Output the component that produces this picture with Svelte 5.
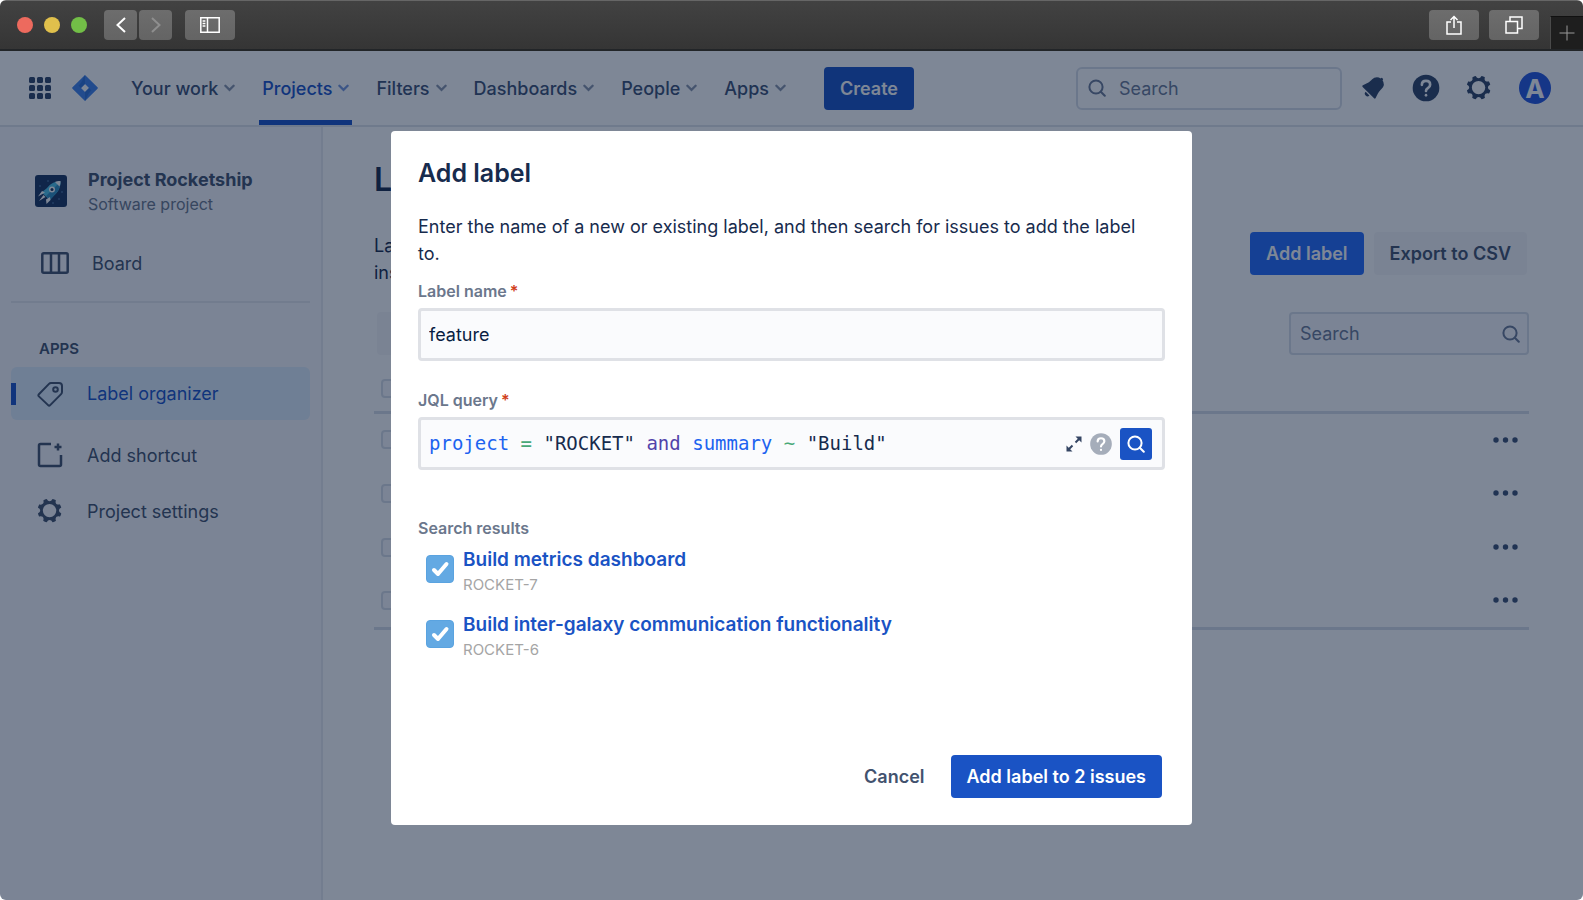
<script lang="ts">
  type NavItem = { name: string; active?: boolean };

  const nav: NavItem[] = [
    { name: 'Your work' },
    { name: 'Projects', active: true },
    { name: 'Filters' },
    { name: 'Dashboards' },
    { name: 'People' },
    { name: 'Apps' },
  ];

  const query = [
    { kind: 'name', text: 'project' },
    { kind: 'operator', text: '=' },
    { kind: 'value', text: '"ROCKET"' },
    { kind: 'keyword', text: 'and' },
    { kind: 'name', text: 'summary' },
    { kind: 'operator', text: '~' },
    { kind: 'value', text: '"Build"' },
  ];

  let labelName = $state('feature');
  let results = $state([
    { key: 'ROCKET-7', summary: 'Build metrics dashboard', checked: true },
    { key: 'ROCKET-6', summary: 'Build inter-galaxy communication functionality', checked: true },
  ]);
  let selected = $derived(results.filter((r) => r.checked).length);

  const rows = [1, 2, 3, 4];
</script>

{#snippet gear()}
  <svg class="icon" viewBox="0 0 24 24" aria-hidden="true">
    <path
      fill="currentColor"
      fill-rule="evenodd"
      d="M11.701 16.7a5.002 5.002 0 110-10.003 5.002 5.002 0 010 10.004m8.368-3.117a1.995 1.995 0 01-1.346-1.885c0-.876.563-1.613 1.345-1.885a.48.48 0 00.315-.574 8.947 8.947 0 00-.836-1.993.477.477 0 00-.598-.195 2.04 2.04 0 01-1.29.08 1.988 1.988 0 01-1.404-1.395 2.04 2.04 0 01.076-1.297.478.478 0 00-.196-.597 8.98 8.98 0 00-1.975-.826.479.479 0 00-.574.314 1.995 1.995 0 01-1.885 1.346 1.994 1.994 0 01-1.884-1.345.482.482 0 00-.575-.315c-.708.2-1.379.485-2.004.842a.47.47 0 00-.198.582A2.002 2.002 0 014.445 7.06a.478.478 0 00-.595.196 8.946 8.946 0 00-.833 1.994.48.48 0 00.308.572 1.995 1.995 0 011.323 1.877c0 .867-.552 1.599-1.324 1.877a.479.479 0 00-.308.57 8.99 8.99 0 00.723 1.79.477.477 0 00.624.194c.595-.273 1.343-.264 2.104.238.117.077.225.185.302.3.527.8.512 1.58.198 2.188a.473.473 0 00.168.628 8.946 8.946 0 002.11.897.474.474 0 00.57-.313 1.995 1.995 0 011.886-1.353c.878 0 1.618.567 1.887 1.353a.475.475 0 00.57.313 8.964 8.964 0 002.084-.883.473.473 0 00.167-.631c-.318-.608-.337-1.393.191-2.195.077-.116.185-.225.302-.302.772-.511 1.527-.513 2.125-.23a.477.477 0 00.628-.19 8.925 8.925 0 00.728-1.793.478.478 0 00-.314-.573"
    />
  </svg>
{/snippet}

{#snippet magnifier()}
  <svg class="magnifier" viewBox="0 0 18 18" aria-hidden="true">
    <circle cx="8" cy="8" r="6.6" />
    <path d="M12.8 12.8l4 4" />
  </svg>
{/snippet}

{#snippet help()}
  <svg class="icon" viewBox="0 0 24 24" aria-hidden="true">
    <circle cx="12" cy="12" r="10" fill="currentColor" />
    <g class="mark">
      <path d="M8.9 9.6C8.9 7.8 10.2 6.7 12 6.7s3.1 1.1 3.1 2.8c0 1.3-.8 2-1.7 2.6-.9.6-1.4 1-1.4 2.1" />
      <path d="M12 17.4v.1" />
    </g>
  </svg>
{/snippet}

<div class="window">
  <div class="titlebar">
    <div class="lights">
      <span class="light close"></span>
      <span class="light minimise"></span>
      <span class="light zoom"></span>
    </div>
    <div class="history">
      <button class="chrome-btn small" aria-label="Back">
        <svg viewBox="0 0 12 18"><path d="M10 2L2.5 9l7.5 7" /></svg>
      </button>
      <button class="chrome-btn small faded" aria-label="Forward">
        <svg viewBox="0 0 12 18"><path d="M2 2l7.5 7L2 16" /></svg>
      </button>
    </div>
    <button class="chrome-btn" aria-label="Show sidebar">
      <svg class="panel" viewBox="0 0 20 16">
        <path d="M.8.8h18.4v14.4H.8zM7.5.8v14.4M2.6 4h2.8M2.6 6.5h2.8M2.6 9h2.8" />
      </svg>
    </button>
    <div class="chrome-end">
      <button class="chrome-btn" aria-label="Share">
        <svg class="share" viewBox="0 0 16 20">
          <path d="M5 7H1v12h14V7h-4M8 13V1.5M4.5 5L8 1.5 11.5 5" />
        </svg>
      </button>
      <button class="chrome-btn" aria-label="Show tabs">
        <svg class="tabs" viewBox="0 0 18 18"><path d="M1 5.5h11.5V17H1zM5 5V1h12v11.5h-4" /></svg>
      </button>
    </div>
    <button class="new-tab" aria-label="New tab">
      <svg viewBox="0 0 16 16"><path d="M8 .5v15M.5 8h15" /></svg>
    </button>
  </div>

  <div class="page">
    <header>
      <button class="plain switcher" aria-label="Switch to">
        <svg viewBox="0 0 22 22">
          {#each [0, 8, 16] as y}
            {#each [0, 8, 16] as x}
              <rect {x} {y} width="6" height="6" rx="1.5" fill="currentColor" />
            {/each}
          {/each}
        </svg>
      </button>
      <a class="logo" href="#home" aria-label="Home">
        <svg viewBox="0 0 26 26">
          <path
            fill="#3f82ec"
            fill-rule="evenodd"
            d="M13 0l12.5 12.3a1 1 0 010 1.4L13 26 .5 13.7a1 1 0 010-1.4zm0 9l-4 4 4 4 4-4z"
          />
          <path
            fill="#2466cc"
            d="M13 0v9L9 13 6.500 10.500C10 8 10.500 4 13 0zM13 26v-9l4-4 2.500 2.500C16 18 15.500 22 13 26z"
            opacity=".6"
          />
        </svg>
      </a>
      <nav>
        {#each nav as item}
          <a href="#nav" class:active={item.active}>
            {item.name}
            <svg viewBox="0 0 12 8"><path d="M1.5 1.5L6 6l4.5-4.5" /></svg>
          </a>
        {/each}
      </nav>
      <button class="btn primary">Create</button>
      <div class="header-end">
        <label class="search">
          {@render magnifier()}
          <input type="text" placeholder="Search" aria-label="Search" />
        </label>
        <div class="tools">
          <button class="plain" aria-label="Notifications">
            <svg class="icon" viewBox="0 0 24 24">
              <path
                fill="currentColor"
                d="M6.485 17.669a2 2 0 002.829 0l-2.829-2.83a2 2 0 000 2.83zm4.897-12.191l-.725.725c-.782.782-2.21 1.813-3.206 2.311l-3.017 1.509c-.495.248-.584.774-.187 1.171l8.556 8.556c.398.396.922.313 1.171-.188l1.51-3.016c.494-.988 1.526-2.42 2.311-3.206l.725-.726a5.048 5.048 0 00.64-6.356 1.01 1.01 0 10-1.354-1.494c-.023.025-.046.049-.066.075a5.043 5.043 0 00-2.788-.84 5.036 5.036 0 00-3.57 1.478z"
              />
            </svg>
          </button>
          <button class="plain" aria-label="Help">{@render help()}</button>
          <button class="plain" aria-label="Settings">{@render gear()}</button>
          <button class="plain avatar" aria-label="Account">A</button>
        </div>
      </div>
    </header>

    <div class="body">
      <aside>
        <div class="project">
          <svg viewBox="0 0 32 32" aria-hidden="true">
            <rect width="32" height="32" rx="3" fill="#1b3560" />
            <path fill="#4fc3e8" d="M25.5 6.5c-6 0-10 2-13.500 6.500L6 18l2.500 1L13 23.500l1 2.500 5-5.500c4.500-4 6.500-8 6.500-14z" />
            <path fill="#2e8fc0" d="M25.5 6.5L11 21l2.500 2.500L14 26l5-5.500c4.500-4 6.500-8 6.500-14z" />
            <path
              fill="#fff"
              d="M25.5 6c-2.500 0-4 .4-5.500 1l4.500 4.500c.7-1.500 1-3 1-5.500zM3 21.500L7 16l3 1.500zM15 22l.5 3-4 4-.5-4.500zM4 26l4.500-6 2 2z"
            />
            <circle cx="17" cy="14.5" r="3" fill="#fff" />
            <circle cx="17" cy="14.5" r="1.5" fill="#1b3560" />
            <g fill="#5a86b8">
              <circle cx="5" cy="11" r=".8" />
              <circle cx="13" cy="6" r=".8" />
              <circle cx="24" cy="24" r=".8" />
              <circle cx="27" cy="17" r=".8" />
              <circle cx="18" cy="28" r=".8" />
            </g>
          </svg>
          <div>
            <strong>Project Rocketship</strong>
            <span>Software project</span>
          </div>
        </div>
        <a class="board" href="#board">
          <svg viewBox="0 0 28 22" aria-hidden="true">
            <rect x="1.3" y="1.3" width="25.4" height="19.4" rx="1.5" />
            <path d="M10 1v20M18 1v20" />
          </svg>
          Board
        </a>
        <hr />
        <h2>APPS</h2>
        <a class="item current" href="#labels">
          <svg class="tag" viewBox="0 0 26 26" aria-hidden="true">
            <path
              d="M14 2h8a3 3 0 013 3v6a3 3 0 01-.9 2.1L13.2 24.1a1.500 1.500 0 01-2.1 0L1.9 15.4a1.500 1.500 0 010-2.1L12 2.9A3 3 0 0114 2z"
            />
            <circle cx="18.5" cy="8.500" r="2.300" />
          </svg>
          Label organizer
        </a>
        <a class="item" href="#shortcut">
          <svg class="shortcut" viewBox="0 0 26 26" aria-hidden="true">
            <path d="M14 2H3.5A1.5 1.5 0 002 3.5v19A1.5 1.5 0 003.5 24h19a1.5 1.5 0 001.5-1.500V13" />
            <path d="M21 1.500v7M17.500 5h7" />
          </svg>
          Add shortcut
        </a>
        <a class="item" href="#settings">
          {@render gear()}
          Project settings
        </a>
      </aside>

      <main>
        <h1>Label organizer</h1>
        <div class="intro">
          <p>Labels<br />inside</p>
          <div class="actions">
            <button class="btn bright">Add label</button>
            <button class="btn subtle">Export to CSV</button>
          </div>
        </div>
        <div class="filters">
          <button class="btn subtle select-all" aria-label="Bulk actions"></button>
          <label class="search">
            <input type="text" placeholder="Search" aria-label="Search labels" />
            {@render magnifier()}
          </label>
        </div>
        <table>
          <thead>
            <tr>
              <th><input class="tick" type="checkbox" aria-label="Select all labels" /></th>
              <th></th>
            </tr>
          </thead>
          <tbody>
            {#each rows as row}
              <tr>
                <td><input class="tick" type="checkbox" aria-label="Select label {row}" /></td>
                <td>
                  <button class="plain more" aria-label="More actions">
                    <svg viewBox="0 0 26 6">
                      <circle cx="3" cy="3" r="2.700" />
                      <circle cx="12.500" cy="3" r="2.700" />
                      <circle cx="22" cy="3" r="2.700" />
                    </svg>
                  </button>
                </td>
              </tr>
            {/each}
          </tbody>
        </table>
      </main>
    </div>

    <div class="blanket">
      <form class="modal" role="dialog" aria-labelledby="modal-title">
        <h2 id="modal-title">Add label</h2>
        <p>Enter the name of a new or existing label, and then search for issues to add the label to.</p>

        <label class="caption" for="label-name">Label name<span class="required">*</span></label>
        <input id="label-name" class="field" type="text" bind:value={labelName} />

        <div class="caption jql-caption" id="jql-caption">JQL query<span class="required">*</span></div>
        <div class="field jql">
          <div class="code" role="textbox" tabindex="0" contenteditable="true" aria-labelledby="jql-caption">
            {#each query as token, i}{i ? ' ' : ''}<span class={token.kind}>{token.text}</span>{/each}
          </div>
          <button type="button" class="plain expand" aria-label="Expand editor">
            <svg viewBox="0 0 16 16">
              <path d="M9.5 6.5l4-4M6.5 9.5l-4 4" />
              <path class="tip" d="M9.5.5h6v6zM.5 9.5v6h6z" />
            </svg>
          </button>
          <button type="button" class="plain syntax" aria-label="Syntax help">{@render help()}</button>
          <button type="button" class="run" aria-label="Search">{@render magnifier()}</button>
        </div>

        <h3 class="caption">Search results</h3>
        <ul>
          {#each results as result}
            <li>
              <span class="check">
                <input type="checkbox" id={result.key} bind:checked={result.checked} />
                {#if result.checked}
                  <svg viewBox="0 0 28 28" aria-hidden="true"><path d="M8 15l4 4 8.5-10" /></svg>
                {/if}
              </span>
              <label for={result.key}>
                <strong>{result.summary}</strong>
                <span>{result.key}</span>
              </label>
            </li>
          {/each}
        </ul>

        <footer>
          <button type="button" class="btn cancel">Cancel</button>
          <button type="button" class="btn primary">Add label to {selected} issues</button>
        </footer>
      </form>
    </div>
  </div>
</div>

<style>
  :global(body) {
    margin: 0;
    background: #fff;
  }
  .window {
    min-height: 100vh;
    display: flex;
    flex-direction: column;
    border-radius: 6px;
    overflow: hidden;
    font-family: Inter, 'Liberation Sans', sans-serif;
    font-size: 18px;
    line-height: 27px;
    color: #172b4d;
  }
  .window * {
    box-sizing: border-box;
  }
  button,
  input {
    font: inherit;
    color: inherit;
    margin: 0;
  }
  a {
    color: inherit;
    text-decoration: none;
  }
  svg {
    display: block;
    flex: none;
  }
  .icon {
    width: 32px;
    height: 32px;
  }
  .plain {
    display: flex;
    padding: 0;
    border: 0;
    background: none;
  }

  /* browser chrome */
  .titlebar {
    height: 51px;
    display: flex;
    align-items: center;
    padding-left: 17px;
    background: linear-gradient(#424242, #353535);
    border-top: 1px solid #666;
    border-bottom: 2px solid #222528;
  }
  .lights {
    display: flex;
    gap: 11px;
    margin-right: 17px;
  }
  .light {
    width: 16px;
    height: 16px;
    border-radius: 50%;
  }
  .close {
    background: #ed6a5e;
  }
  .minimise {
    background: #e0c04c;
  }
  .zoom {
    background: #72be47;
  }
  .history {
    display: flex;
    gap: 2px;
    margin-right: 13px;
  }
  .chrome-btn {
    width: 50px;
    height: 30px;
    display: flex;
    align-items: center;
    justify-content: center;
    padding: 0;
    border: 0;
    border-radius: 4px;
    background: linear-gradient(#6d6d6d, #646464);
  }
  .chrome-btn.small {
    width: 33px;
  }
  .titlebar svg {
    fill: none;
    stroke: #fff;
    stroke-width: 1.5;
  }
  .titlebar .small svg {
    width: 12px;
    height: 18px;
    stroke-width: 2;
  }
  .titlebar .faded svg {
    stroke: #8e8e8e;
  }
  .panel {
    width: 20px;
    height: 16px;
  }
  .share {
    width: 16px;
    height: 20px;
  }
  .tabs {
    width: 18px;
    height: 18px;
  }
  .chrome-end {
    display: flex;
    gap: 10px;
    margin-left: auto;
    margin-right: 11px;
  }
  .new-tab {
    align-self: flex-end;
    width: 33px;
    height: 33px;
    display: flex;
    align-items: center;
    justify-content: center;
    padding: 0;
    border: 0;
    border-left: 1px solid #4a4a4a;
    border-top: 1px solid #111;
    background: #1e1e1e;
  }
  .titlebar .new-tab svg {
    width: 16px;
    height: 16px;
    stroke: #999;
    stroke-width: 1;
  }

  /* site header */
  .page {
    flex: 1;
    display: flex;
    flex-direction: column;
    position: relative;
    background: #fff;
  }
  header {
    height: 76px;
    display: flex;
    align-items: center;
    padding: 0 32px 0 29px;
    border-bottom: 2px solid #dfe3ea;
    font-weight: 500;
    color: #3c5074;
  }
  .switcher,
  .tools {
    color: #2f4468;
  }
  .switcher svg {
    width: 22px;
    height: 22px;
  }
  .logo {
    margin: 0 30px 0 21px;
  }
  .logo svg {
    width: 26px;
    height: 26px;
  }
  nav {
    align-self: stretch;
    display: flex;
    gap: 21px;
    margin-right: 35px;
  }
  nav a {
    display: flex;
    align-items: center;
    gap: 6px;
    padding: 5px 3px 0;
    border-bottom: 5px solid transparent;
  }
  nav a.active {
    color: #1a53c8;
    border-color: #1a53c8;
  }
  nav svg {
    width: 11px;
    height: 8px;
    fill: none;
    stroke: currentColor;
    stroke-width: 2.5;
    stroke-linecap: round;
    opacity: 0.6;
  }
  .btn {
    height: 43px;
    padding: 0 16px;
    border: 0;
    border-radius: 4px;
    font-weight: 600;
    white-space: nowrap;
  }
  .primary {
    background: #1a53c4;
    color: #fff;
  }
  .bright {
    background: #256cfa;
    color: #fff;
  }
  .subtle {
    background: #f6f6f9;
    color: #42526e;
  }
  .header-end {
    display: flex;
    align-items: center;
    gap: 15px;
    margin-left: auto;
  }
  .search {
    width: 266px;
    height: 43px;
    display: flex;
    align-items: center;
    padding: 0 10px;
    gap: 13px;
    border: 2px solid #d8dee8;
    border-radius: 6px;
    font-weight: 400;
    color: #6b7a96;
  }
  .search input {
    flex: 1;
    min-width: 0;
    padding: 0;
    border: 0;
    background: none;
    outline: 0;
  }
  .search input::placeholder {
    color: #6b7a96;
    opacity: 1;
  }
  .magnifier {
    width: 18px;
    height: 18px;
    fill: none;
    stroke: currentColor;
    stroke-width: 2;
    stroke-linecap: round;
  }
  .tools {
    display: flex;
    align-items: center;
    gap: 21px;
  }
  .mark {
    fill: none;
    stroke: #fff;
    stroke-width: 2;
    stroke-linecap: round;
  }
  .avatar {
    width: 32px;
    height: 32px;
    margin-left: 3px;
    align-items: center;
    justify-content: center;
    border-radius: 50%;
    background: #2456e0;
    color: #fff;
    font-size: 26px;
    font-weight: 700;
  }

  /* sidebar */
  .body {
    flex: 1;
    display: flex;
  }
  aside {
    width: 323px;
    padding: 39px 11px 0;
    border-right: 2px solid #e8eaf0;
    background: #f8f8fc;
    color: #42526e;
  }
  .project {
    display: flex;
    align-items: center;
    gap: 21px;
    padding-left: 24px;
  }
  .project svg {
    width: 32px;
    height: 32px;
  }
  .project div {
    padding-top: 2px;
  }
  .project strong,
  .project span {
    display: block;
    line-height: 24px;
  }
  .project strong {
    font-weight: 700;
  }
  .project span {
    font-size: 16px;
    color: #6b778c;
  }
  .board {
    display: flex;
    align-items: center;
    gap: 23px;
    height: 54px;
    margin-top: 20px;
    padding-left: 30px;
  }
  .board svg {
    width: 28px;
    height: 22px;
  }
  .board svg,
  .tag,
  .shortcut {
    fill: none;
    stroke: currentColor;
    stroke-width: 2.5;
  }
  hr {
    height: 2px;
    margin: 11px 0 32px;
    border: 0;
    background: #e6e8ee;
  }
  aside h2 {
    margin: 0 0 5px 28px;
    font-size: 15px;
    font-weight: 600;
  }
  .item {
    height: 56px;
    display: flex;
    align-items: center;
    gap: 24px;
    padding-left: 26px;
  }
  .item .icon {
    margin: 0 -3px;
  }
  .tag,
  .shortcut {
    width: 26px;
    height: 26px;
  }
  .tag {
    stroke-width: 2;
    color: #42526e;
  }
  .current {
    height: 53px;
    margin-bottom: 7px;
    border-radius: 6px;
    background: linear-gradient(#1a53c8, #1a53c8) left center / 5px 22px no-repeat #dfeffd;
    color: #1a53c8;
  }

  /* label list */
  main {
    flex: 1;
    padding: 33px 54px 0 51px;
  }
  h1 {
    margin: 0 0 32px;
    font-size: 32px;
    line-height: 40px;
    font-weight: 600;
  }
  .intro,
  .filters {
    display: flex;
    justify-content: space-between;
    align-items: flex-start;
  }
  .intro p {
    margin: 0;
  }
  .actions {
    display: flex;
    gap: 10px;
    padding-right: 2px;
  }
  .filters {
    margin-top: 26px;
    padding-left: 3px;
  }
  .select-all {
    width: 120px;
  }
  .filters .search {
    width: 240px;
    padding: 0 7px 0 9px;
    background: #f8f8fc;
    border-radius: 4px;
  }
  table {
    width: 100%;
    margin-top: 12px;
    border-collapse: collapse;
  }
  thead tr {
    height: 45px;
    border-bottom: 3px solid #d8dee8;
  }
  tbody {
    border-bottom: 3px solid #d8dee8;
  }
  tbody tr {
    height: 54px;
  }
  th,
  td {
    padding: 0 10px 0 7px;
    text-align: left;
  }
  .tick {
    display: block;
    width: 19px;
    height: 19px;
    appearance: none;
    border: 2px solid #d8dee8;
    border-radius: 4px;
    background: #f8f8fc;
  }
  .more {
    margin-left: auto;
  }
  .more svg {
    width: 26px;
    height: 6px;
    fill: #3c5074;
  }

  /* dialog */
  .blanket {
    position: absolute;
    inset: 0;
    display: flex;
    align-items: flex-start;
    justify-content: center;
    padding: 80px 16px 16px;
    background: rgba(8, 24, 54, 0.52);
  }
  .modal {
    width: 100%;
    max-width: 801px;
    padding: 27px;
    border-radius: 4px;
    background: #fff;
  }
  .modal h2 {
    margin: 0 0 25px;
    font-size: 25px;
    line-height: 30px;
    font-weight: 600;
  }
  .modal p {
    margin: 0;
    padding-right: 20px;
  }
  .caption {
    display: block;
    margin: 14px 0 7px;
    font-size: 16px;
    line-height: 20px;
    font-weight: 600;
    color: #6b778c;
  }
  .required {
    margin-left: 3px;
    color: #d0401b;
  }
  .jql-caption {
    margin-top: 29px;
  }
  .field {
    width: 100%;
    height: 53px;
    padding: 0 8px;
    border: 3px solid #dfe1e6;
    border-radius: 4px;
    background: #fafbfd;
    color: #091e42;
  }
  .jql {
    display: flex;
    align-items: center;
    padding-right: 10px;
  }
  .code {
    flex: 1;
    outline: 0;
    font-family: 'DejaVu Sans Mono', monospace;
    font-size: 19px;
    color: #172b4d;
  }
  .name {
    color: #1d63f0;
  }
  .operator {
    color: #48a877;
  }
  .keyword {
    color: #5243aa;
  }
  .expand svg {
    width: 16px;
    height: 16px;
    fill: none;
    stroke: #344563;
    stroke-width: 2;
  }
  .expand .tip {
    fill: #344563;
    stroke: none;
  }
  .syntax {
    margin: 0 6px;
    color: #a5adba;
  }
  .syntax .icon {
    width: 26px;
    height: 26px;
  }
  .run {
    width: 32px;
    height: 32px;
    display: flex;
    align-items: center;
    justify-content: center;
    padding: 0;
    border: 0;
    border-radius: 3px;
    background: #1a53c4;
    color: #fff;
  }
  h3.caption {
    margin: 48px 0 6px;
  }
  ul {
    display: grid;
    gap: 15px;
    margin: 0;
    padding: 0;
    list-style: none;
  }
  li {
    display: flex;
    align-items: center;
    gap: 9px;
    height: 50px;
    padding-left: 8px;
  }
  .check {
    position: relative;
  }
  .check input {
    display: block;
    width: 28px;
    height: 28px;
    appearance: none;
    border: 1px solid #5aa3e0;
    border-radius: 4px;
  }
  .check input:checked {
    background: #63a9e3;
  }
  .check svg {
    position: absolute;
    inset: 0;
    fill: none;
    stroke: #fff;
    stroke-width: 4;
    stroke-linecap: round;
    stroke-linejoin: round;
    pointer-events: none;
  }
  li label {
    padding-top: 6px;
  }
  li strong,
  li label span {
    display: block;
    line-height: 25px;
  }
  li strong {
    font-size: 19px;
    font-weight: 600;
    color: #1a53c4;
  }
  li label span {
    font-size: 15px;
    color: #a5a5a5;
  }
  footer {
    display: flex;
    justify-content: flex-end;
    gap: 10px;
    margin-top: 96px;
    padding-right: 3px;
  }
  .cancel {
    background: none;
    color: #42526e;
  }
</style>
